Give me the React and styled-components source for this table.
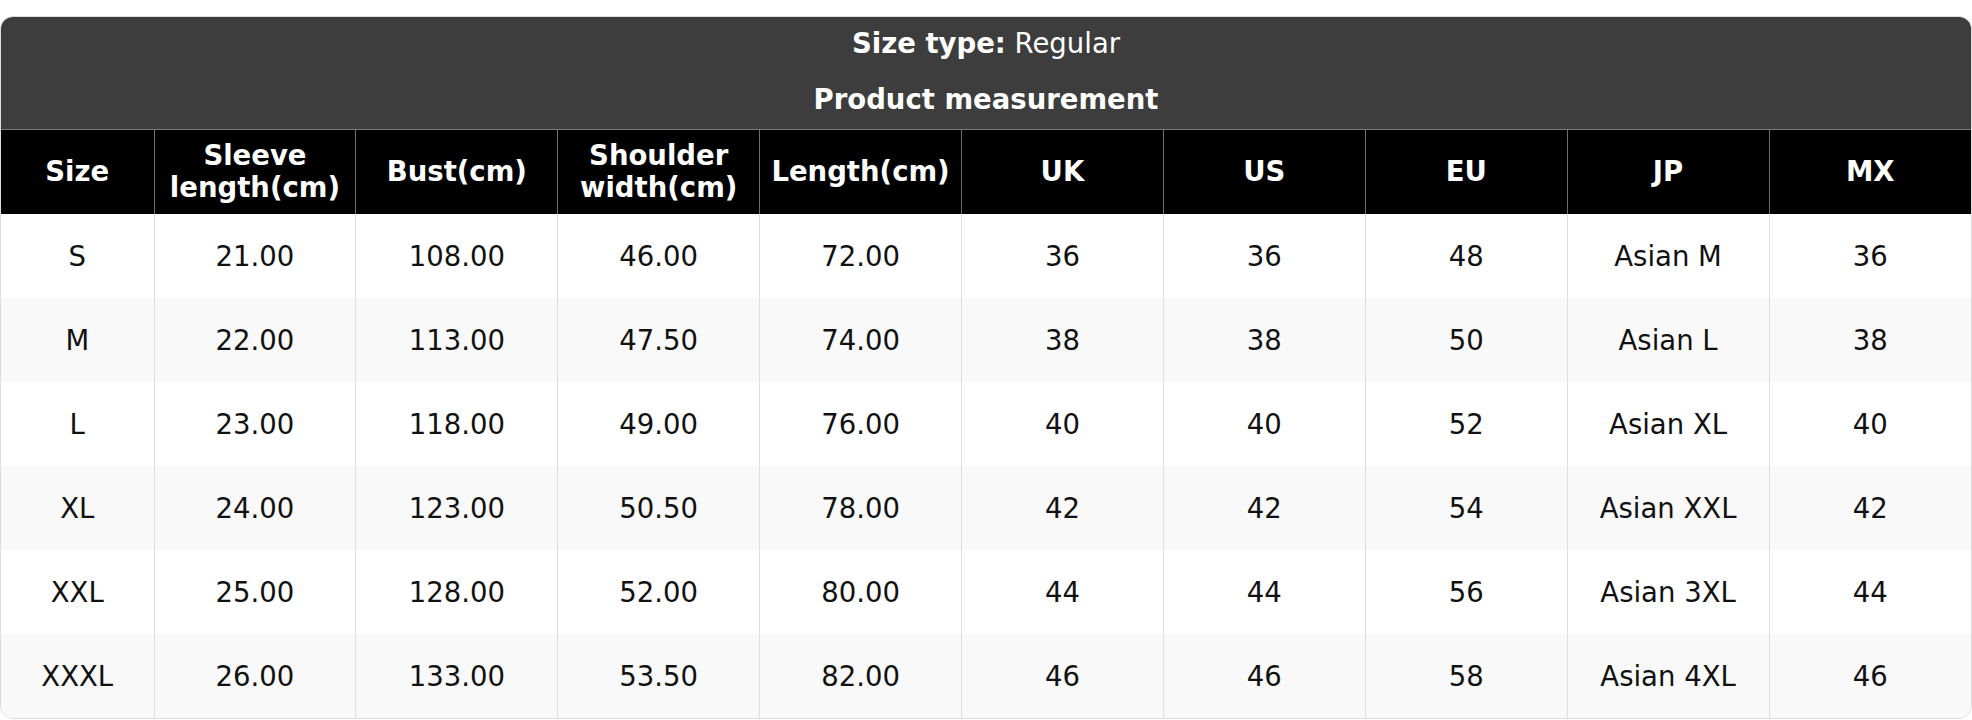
import React from 'react';
import styled, { createGlobalStyle } from 'styled-components';

const GlobalStyle = createGlobalStyle`
    html, body {
        margin: 0;
        padding: 0;
        background: #fff;
    }
`;

const Page = styled.div`
    padding-top: 16px;
    font-family: "DejaVu Sans", Verdana, sans-serif;
`;

const Card = styled.div`
    width: 1972px;
    box-sizing: border-box;
    border: 1px solid #dcdcdc;
    border-radius: 13px;
    overflow: hidden;
    background: #fff;
`;

const Table = styled.table`
    width: 100%;
    border-collapse: collapse;
    table-layout: fixed;
    font-size: 27.5px;
`;

const BandCell = styled.th`
    height: 56px;
    padding: 0 0 4px;
    box-sizing: border-box;
    background: #3d3d3d;
    color: #fff;
    font-weight: ${ props => (props.bold ? 700 : 400) };
    text-align: center;
    vertical-align: middle;
    line-height: 32px;
`;

const Strong = styled.span`
    font-weight: 700;
`;

const Regular = styled.span`
    font-weight: 400;
`;

const HeadCell = styled.th`
    box-sizing: border-box;
    height: 85px;
    padding: 0 6px 1px;
    background: #000;
    color: #fff;
    font-weight: 700;
    line-height: 32px;
    text-align: center;
    vertical-align: middle;
    border-top: 1.5px solid #7a7a7a;
    border-left: 1.5px solid #6e6e6e;

    &:first-child {
        border-left: none;
    }
`;

const Row = styled.tr`
    background: ${ props => (props.striped ? '#f9f9f9' : '#fff') };
`;

const Cell = styled.td`
    height: 84px;
    padding: 0;
    color: #111;
    text-align: center;
    vertical-align: middle;
    border-left: 1.5px solid #dedede;

    &:first-child {
        border-left: none;
    }
`;

const columns = [
    'Size',
    'Sleeve length(cm)',
    'Bust(cm)',
    'Shoulder width(cm)',
    'Length(cm)',
    'UK',
    'US',
    'EU',
    'JP',
    'MX',
];

const rows = [
    ['S', '21.00', '108.00', '46.00', '72.00', '36', '36', '48', 'Asian M', '36'],
    ['M', '22.00', '113.00', '47.50', '74.00', '38', '38', '50', 'Asian L', '38'],
    ['L', '23.00', '118.00', '49.00', '76.00', '40', '40', '52', 'Asian XL', '40'],
    ['XL', '24.00', '123.00', '50.50', '78.00', '42', '42', '54', 'Asian XXL', '42'],
    ['XXL', '25.00', '128.00', '52.00', '80.00', '44', '44', '56', 'Asian 3XL', '44'],
    ['XXXL', '26.00', '133.00', '53.50', '82.00', '46', '46', '58', 'Asian 4XL', '46'],
];

const App = () => (
    <Page>
        <GlobalStyle />
        <Card>
            <Table>
                <colgroup>
                    <col style = { { width: 153 } } />
                    { columns.slice(1).map(c => <col key = { c } />) }
                </colgroup>
                <thead>
                    <tr>
                        <BandCell colSpan = { columns.length }>
                            <Strong>Size type:</Strong> <Regular>Regular</Regular>
                        </BandCell>
                    </tr>
                    <tr>
                        <BandCell bold colSpan = { columns.length }>Product measurement</BandCell>
                    </tr>
                    <tr>
                        { columns.map(c => <HeadCell key = { c }>{ c }</HeadCell>) }
                    </tr>
                </thead>
                <tbody>
                    { rows.map((r, i) => (
                        <Row key = { r[0] } striped = { i % 2 === 1 }>
                            { r.map((v, j) => <Cell key = { j }>{ v }</Cell>) }
                        </Row>
                    )) }
                </tbody>
            </Table>
        </Card>
    </Page>
);

export default App;
